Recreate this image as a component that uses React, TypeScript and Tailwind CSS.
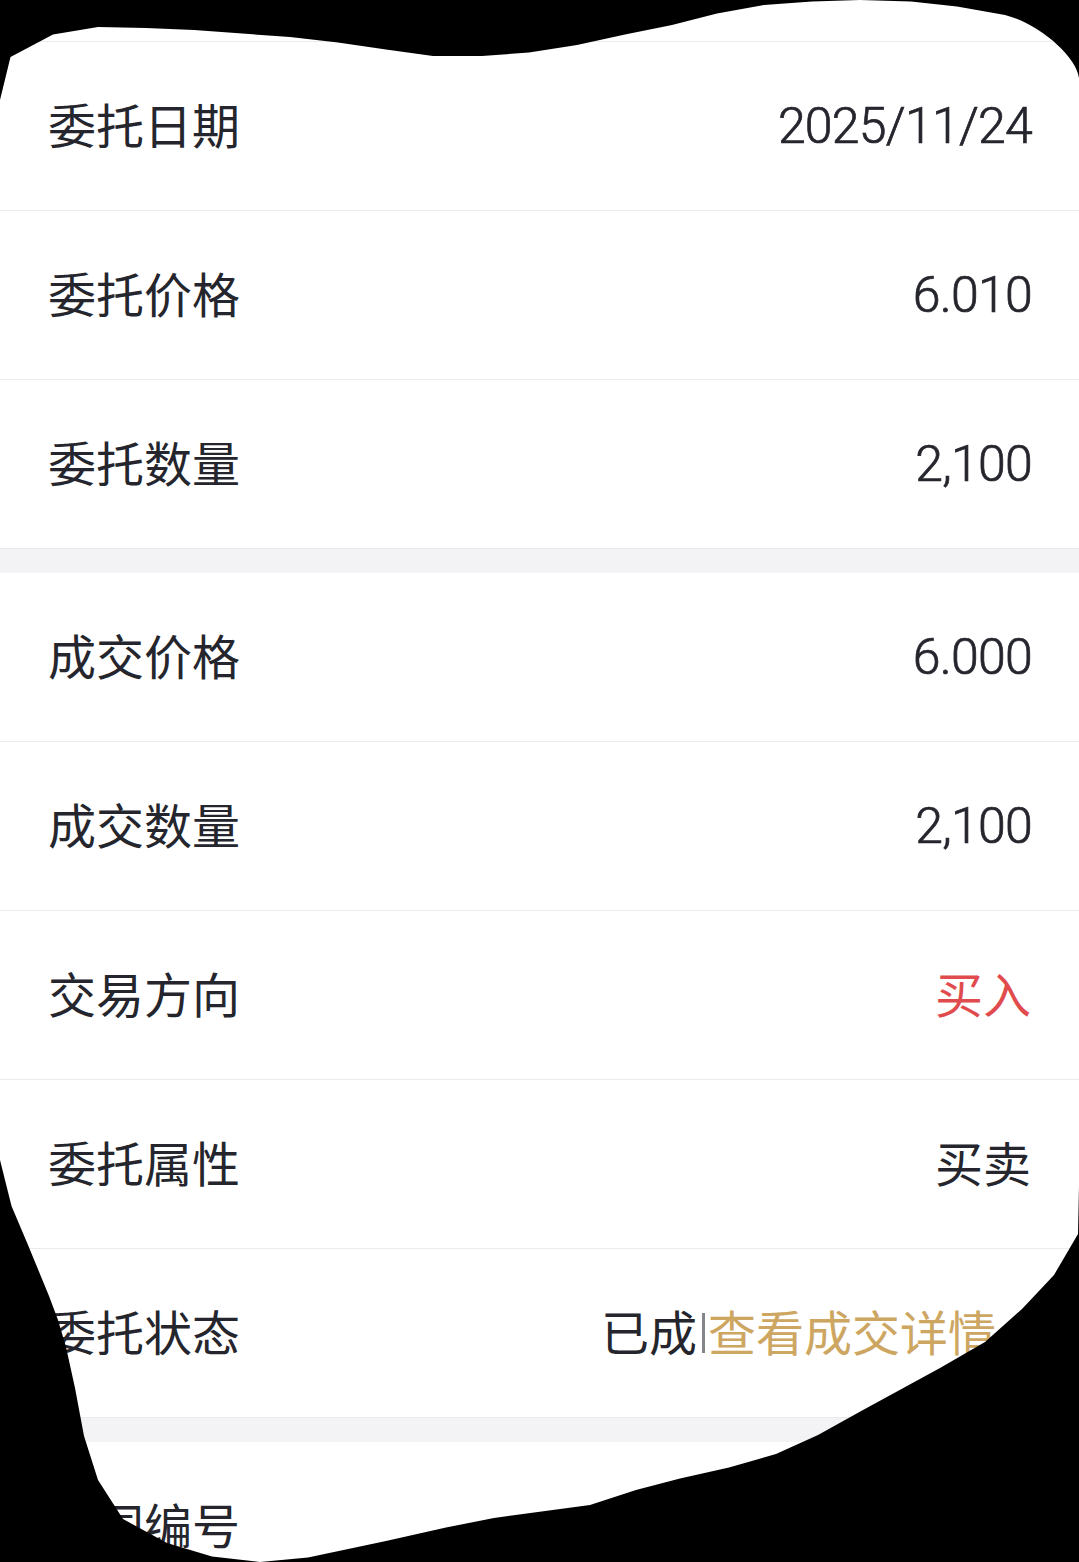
import type { ReactNode } from "react";

type RowProps = { label: string; children?: ReactNode };

function Row({ label, children }: RowProps) {
  return (
    <div className="flex h-[169px] shrink-0 items-center justify-between border-b border-[#ebebed] px-12 pb-[6px]">
      <span>{label}</span>
      <span className="flex items-center">{children}</span>
    </div>
  );
}

function Num({ children }: { children: string }) {
  return (
    <span className="mr-[-1px] pt-[5px] font-[Roboto,sans-serif] text-[50px] font-light tracking-[-0.75px] [-webkit-text-stroke:0.7px_#25262d] [font-kerning:none]">
      {children}
    </span>
  );
}

function Gap() {
  return <div className="h-6 shrink-0 bg-[#f3f3f5]" />;
}

// Irregular black surround that hides everything outside the torn outline.
function TornFrame() {
  return (
    <svg
      className="pointer-events-none absolute inset-0"
      width="1079"
      height="1562"
      viewBox="0 0 1079 1562"
      aria-hidden="true"
    >
      <path
        fill="#000"
        fillRule="evenodd"
        d="M-2 -2H1081V1564H-2Z M0 100L10.500 57L53 34.500L98 27L146 28L194 30L290 37L338 42.500L386 49.500L433 56L482 56L529 52.500L577 45L625 34.500L672 25L717 13.500L764 5L812 1.500L860 0L911 1.500L957 6.500L1005 15C1037 23 1076 55 1079 78V1186L1078 1234L1054 1275L1022 1309L985 1342L940 1368L863 1410L818 1435L776 1454L729 1467.500L680 1478.500L636 1490L590 1505L494 1518L446 1527.500L386 1541L308 1557.500L260 1562L212 1556.500L167 1543L123 1519L98 1480L84 1436L75 1388L66 1347L58 1320L49 1296L28 1245L11.500 1206L0 1160Z"
      />
    </svg>
  );
}

export default function App() {
  return (
    <main className="relative flex h-[1562px] w-[1079px] flex-col overflow-hidden bg-white font-['Noto_Sans_CJK_SC',sans-serif] text-[48px] leading-none text-[#25262d]">
      <div className="h-[42px] shrink-0 border-b border-[#ebebed]" />
      <Row label="委托日期">
        <Num>2025/11/24</Num>
      </Row>
      <Row label="委托价格">
        <Num>6.010</Num>
      </Row>
      <Row label="委托数量">
        <Num>2,100</Num>
      </Row>
      <Gap />
      <Row label="成交价格">
        <Num>6.000</Num>
      </Row>
      <Row label="成交数量">
        <Num>2,100</Num>
      </Row>
      <Row label="交易方向">
        <span className="text-[#e04c4d]">买入</span>
      </Row>
      <Row label="委托属性">买卖</Row>
      <Row label="委托状态">
        <span>已成</span>
        <span className="mt-[6px] mr-[3px] ml-[5px] h-10 w-[3px] bg-[#85868a]" />
        <span className="text-[#cda661]">查看成交详情</span>
        <span className="w-[35px]" />
      </Row>
      <Gap />
      <Row label="合同编号" />
      <TornFrame />
    </main>
  );
}
